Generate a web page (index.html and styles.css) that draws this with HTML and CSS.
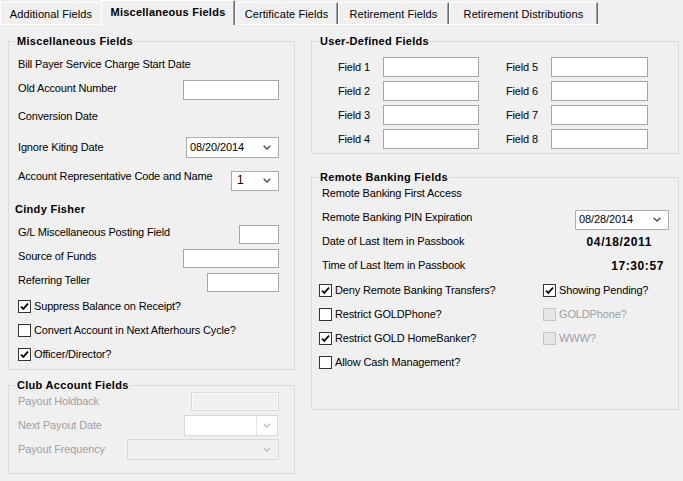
FILE: index.html
```html
<!DOCTYPE html>
<html>
<head>
<meta charset="utf-8">
<link rel="stylesheet" href="styles.css">
</head>
<body>
<div class="tabbar">
  <div class="tab t1">Additional Fields</div>
  <div class="tab sel t2">Miscellaneous Fields</div>
  <div class="tab t3">Certificate Fields</div>
  <div class="tab t4">Retirement Fields</div>
  <div class="tab t5">Retirement Distributions</div>
</div>
<div class="panel">
  <div class="col left">
    <fieldset class="grp">
      <legend>Miscellaneous Fields</legend>
      <div class="gbody misc">
        <div class="row"><span class="lbl">Bill Payer Service Charge Start Date</span></div>
        <div class="row m2"><span class="lbl up">Old Account Number</span><span class="tb w96"></span></div>
        <div class="row m2"><span class="lbl">Conversion Date</span></div>
        <div class="row m7"><span class="lbl">Ignore Kiting Date</span>
          <span class="combo w93"><span class="val">08/20/2014</span><svg class="chev" width="8" height="5" viewBox="0 0 8 5"><polyline points="0.7,0.7 4,4 7.3,0.7" fill="none" stroke="#505050" stroke-width="1.5"/></svg></span></div>
        <div class="row m7"><span class="lbl up">Account Representative Code and Name</span>
          <span class="combo w48 dn"><span class="val pad">1</span><svg class="chev" width="8" height="5" viewBox="0 0 8 5"><polyline points="0.7,0.7 4,4 7.3,0.7" fill="none" stroke="#505050" stroke-width="1.5"/></svg></span></div>
        <div class="row m7"><span class="lbl bold out">Cindy Fisher</span></div>
        <div class="row m1"><span class="lbl up">G/L Miscellaneous Posting Field</span><span class="tb w40 h19"></span></div>
        <div class="row"><span class="lbl up">Source of Funds</span><span class="tb w96 h19"></span></div>
        <div class="row"><span class="lbl up">Referring Teller</span><span class="tb w72 h19"></span></div>
        <div class="row"><label class="cb out"><span class="box"><svg width="11" height="11" viewBox="0 0 11 11"><polyline points="2,5.6 4.3,7.9 9,2.6" fill="none" stroke="#000" stroke-width="1.7"/></svg></span>Suppress Balance on Receipt?</label></div>
        <div class="row"><label class="cb out"><span class="box"></span>Convert Account in Next Afterhours Cycle?</label></div>
        <div class="row"><label class="cb out"><span class="box"><svg width="11" height="11" viewBox="0 0 11 11"><polyline points="2,5.6 4.3,7.9 9,2.6" fill="none" stroke="#000" stroke-width="1.7"/></svg></span>Officer/Director?</label></div>
      </div>
    </fieldset>
    <fieldset class="grp">
      <legend>Club Account Fields</legend>
      <div class="gbody club">
        <div class="row h19"><span class="lbl dis">Payout Holdback</span><span class="tb off w88 h19"></span></div>
        <div class="row m2"><span class="lbl dis">Next Payout Date</span>
          <span class="combo offw w94"><span class="btn"><svg width="8" height="5" viewBox="0 0 8 5"><polyline points="0.7,0.7 4,4 7.3,0.7" fill="none" stroke="#c4c4c4" stroke-width="1.5"/></svg></span></span></div>
        <div class="row"><span class="lbl dis">Payout Frequency</span>
          <span class="combo off w152"><svg class="chev" width="8" height="5" viewBox="0 0 8 5"><polyline points="0.7,0.7 4,4 7.3,0.7" fill="none" stroke="#c4c4c4" stroke-width="1.5"/></svg></span></div>
      </div>
    </fieldset>
  </div>
  <div class="col right">
    <fieldset class="grp">
      <legend>User-Defined Fields</legend>
      <div class="gbody udf">
        <span class="flbl">Field 1</span><span class="tb"></span><span></span><span class="flbl">Field 5</span><span class="tb"></span>
        <span class="flbl">Field 2</span><span class="tb"></span><span></span><span class="flbl">Field 6</span><span class="tb"></span>
        <span class="flbl">Field 3</span><span class="tb"></span><span></span><span class="flbl">Field 7</span><span class="tb"></span>
        <span class="flbl">Field 4</span><span class="tb"></span><span></span><span class="flbl">Field 8</span><span class="tb"></span>
      </div>
    </fieldset>
    <fieldset class="grp">
      <legend>Remote Banking Fields</legend>
      <div class="gbody remote">
        <div class="row h18"><span class="lbl in">Remote Banking First Access</span></div>
        <div class="row m4"><span class="lbl in up1">Remote Banking PIN Expiration</span>
          <span class="combo w94 dn3"><span class="val">08/28/2014</span><svg class="chev" width="8" height="5" viewBox="0 0 8 5"><polyline points="0.7,0.7 4,4 7.3,0.7" fill="none" stroke="#505050" stroke-width="1.5"/></svg></span></div>
        <div class="row"><span class="lbl in up1">Date of Last Item in Passbook</span><span class="value v1">04/18/2011</span></div>
        <div class="row"><span class="lbl in up1">Time of Last Item in Passbook</span><span class="value v2">17:30:57</span></div>
        <div class="cbgrid">
          <label class="cb"><span class="box"><svg width="11" height="11" viewBox="0 0 11 11"><polyline points="2,5.6 4.3,7.9 9,2.6" fill="none" stroke="#000" stroke-width="1.7"/></svg></span>Deny Remote Banking Transfers?</label>
          <label class="cb"><span class="box"><svg width="11" height="11" viewBox="0 0 11 11"><polyline points="2,5.6 4.3,7.9 9,2.6" fill="none" stroke="#000" stroke-width="1.7"/></svg></span>Showing Pending?</label>
          <label class="cb"><span class="box"></span>Restrict GOLDPhone?</label>
          <label class="cb dis"><span class="box"></span>GOLDPhone?</label>
          <label class="cb"><span class="box"><svg width="11" height="11" viewBox="0 0 11 11"><polyline points="2,5.6 4.3,7.9 9,2.6" fill="none" stroke="#000" stroke-width="1.7"/></svg></span>Restrict GOLD HomeBanker?</label>
          <label class="cb dis"><span class="box"></span>WWW?</label>
          <label class="cb"><span class="box"></span>Allow Cash Management?</label>
        </div>
      </div>
    </fieldset>
  </div>
</div>
</body>
</html>
```
FILE: styles.css
```css
* { box-sizing: border-box; }
html, body { margin: 0; padding: 0; }
body {
  background: #f0f0f0;
  font-family: "Liberation Sans", Arial, sans-serif;
  font-size: 11px;
  line-height: 13px;
  color: #000;
  width: 683px;
  height: 481px;
  overflow: hidden;
}

/* tabs */
.tabbar {
  display: flex;
  align-items: flex-end;
  height: 25px;
  width: 600px;
  border-bottom: 1px solid #fff;
}
.tab {
  height: 22px;
  display: flex;
  align-items: center;
  justify-content: center;
  padding-top: 1px;
  border-top: 1px solid #fff;
  border-left: 1px solid #fff;
  border-right: 1px solid #696969;
  box-shadow: inset -1px 0 0 #a0a0a0;
  letter-spacing: 0.1px;
}
.tab.sel {
  height: 25px;
  margin-bottom: -1px;
  padding-top: 0;
  padding-bottom: 2px;
  font-weight: bold;
  letter-spacing: 0.25px;
  background: #f0f0f0;
  position: relative;
}
.t1 { width: 101px; border-right: none; box-shadow: none; }
.t2 { width: 134px; }
.t3 { width: 103px; }
.t4 { width: 111px; }
.t5 { width: 149px; }

/* panel layout */
.panel {
  display: flex;
  gap: 16px;
  padding: 9px 0 0 8px;
}
.col { display: flex; flex-direction: column; }
.col.left { width: 287px; gap: 8px; }
.col.right { width: 368px; gap: 16px; }

.grp {
  margin: 0;
  padding: 0;
  border: 1px solid #dcdcdc;
  min-width: 0;
}
.grp legend {
  font-weight: bold;
  letter-spacing: 0.3px;
  line-height: 14px;
  padding: 0 1px;
  margin-left: 7px;
}

.gbody.misc { padding: 4px 15px 3px 9px; }
.gbody.club { padding: 0 15px 12px 9px; }
.gbody.udf {
  padding: 7px 0 2px 26px;
  display: grid;
  grid-template-columns: 45px 96px 27px 45px 97px;
  grid-auto-rows: 24px;
  align-items: center;
}
.gbody.remote { padding: 0 9px 35px 7px; }

.row {
  display: flex;
  align-items: center;
  justify-content: space-between;
  height: 24px;
}
.row.h19 { height: 19px; }
.row.h18 { height: 18px; }
.m1 { margin-top: 1px; }
.m2 { margin-top: 2px; }
.m4 { margin-top: 4px; }
.m7 { margin-top: 7px; }

.lbl { white-space: nowrap; letter-spacing: -0.15px; }
.lbl.up { margin-bottom: 3px; }
.lbl.up1 { margin-bottom: 1px; }
.lbl.bold { font-weight: bold; letter-spacing: 0.3px; }
.lbl.out { margin-left: -3px; }
.lbl.in { margin-left: 3px; }
.dis { color: #a0a0a0; }
.flbl { letter-spacing: -0.15px; }

/* text boxes */
.tb {
  display: block;
  height: 20px;
  background: #fff;
  border: 1px solid #a5a5a5;
}
.tb.h19 { height: 19px; }
.w40 { width: 40px; }
.w48 { width: 48px; }
.w72 { width: 72px; }
.w88 { width: 88px; }
.w93 { width: 93px; }
.w94 { width: 94px; }
.w96 { width: 96px; }
.w152 { width: 152px; }
.tb.off {
  background: #f0f0f0;
  border-color: #dadada;
  box-shadow: inset 0 0 0 1px #fafafa;
}

/* combo boxes */
.combo {
  display: flex;
  align-items: center;
  height: 21px;
  background: #fff;
  border: 1px solid #acacac;
  padding-left: 3px;
}
.combo.dn { height: 20px; margin-top: 5px; }
.combo.dn3 { height: 20px; margin-top: 3px; }
.combo .val { letter-spacing: -0.1px; }
.combo .val.pad { padding-left: 2px; font-size: 12px; }
.chev { margin-left: auto; margin-right: 7px; }
.combo.off { background: #f0f0f0; border-color: #d9d9d9; }
.combo.offw { background: #fff; border-color: #d9d9d9; padding-left: 0; margin-right: 1px; }
.combo .btn {
  margin-left: auto;
  width: 21px;
  height: 100%;
  border-left: 1px solid #e3e3e3;
  display: flex;
  align-items: center;
  justify-content: center;
}

.value {
  font-weight: bold;
  font-size: 12px;
  letter-spacing: 0.6px;
}
.value.v1 { margin-right: 17px; }
.value.v2 { margin-right: 5px; }

/* checkboxes */
.cb {
  display: flex;
  align-items: center;
  gap: 3px;
  white-space: nowrap;
  letter-spacing: -0.15px;
}
.box {
  width: 13px;
  height: 13px;
  border: 1px solid #333;
  background: #fff;
  display: flex;
  align-items: center;
  justify-content: center;
  flex: none;
}
.cb.dis .box { border-color: #c6c6c6; background: #e6e6e6; }
.cbgrid {
  display: grid;
  grid-template-columns: 224px 1fr;
  grid-auto-rows: 24px;
  align-items: center;
}
```
